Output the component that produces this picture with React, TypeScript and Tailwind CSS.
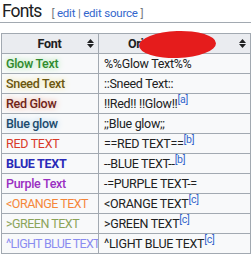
import React from 'react';

type Row = {
  name: string;
  cls: string;
  code: string;
  note?: string;
};

const rows: Row[] = [
  { name: 'Glow Text', cls: 'text-[#2f8a2f] font-medium [text-shadow:0_0_6px_#9be39b]', code: '%%Glow Text%%' },
  { name: 'Sneed Text', cls: 'text-[#6a5610] font-medium [text-shadow:0_0_6px_#efe08a]', code: '::Sneed Text::' },
  { name: 'Red Glow', cls: 'text-[#6e2418] font-medium [text-shadow:0_0_6px_#f2a58a]', code: '!!Red!! !!Glow!!', note: 'a' },
  { name: 'Blue glow', cls: 'text-[#1c4a6c] font-medium [text-shadow:0_0_6px_#a8d2ee]', code: ';;Blue glow;;' },
  { name: 'RED TEXT', cls: 'text-[#d83a2a]', code: '==RED TEXT==', note: 'b' },
  { name: 'BLUE TEXT', cls: 'text-[#2a2ab8] font-bold', code: '--BLUE TEXT--', note: 'b' },
  { name: 'Purple Text', cls: 'text-[#9a2fc2] font-medium', code: '-=PURPLE TEXT-=' },
  { name: '<ORANGE TEXT', cls: 'text-[#f5873a] tracking-[-0.5px]', code: '<ORANGE TEXT', note: 'c' },
  { name: '>GREEN TEXT', cls: 'text-[#8ca45a] tracking-[-0.5px]', code: '>GREEN TEXT', note: 'c' },
  { name: '^LIGHT BLUE TEXT', cls: 'text-[#8a8cf0] tracking-[-0.7px]', code: '^LIGHT BLUE TEXT', note: 'c' },
];

function SortIcon() {
  return (
    <svg width="7" height="9" viewBox="0 0 7 9" className="shrink-0">
      <path d="M3.5 0 L7 4 L0 4 Z M3.5 9 L0 5 L7 5 Z" fill="#202122" />
    </svg>
  );
}

export default function App() {
  return (
    <div className="w-[251px] h-[255px] overflow-hidden bg-white font-['Roboto','Liberation_Sans',sans-serif] text-[#202122]">
      <div className="flex items-baseline gap-[10px] pl-[2px] pt-[2px] border-b border-[#a2a9b1]">
        <h2 className="text-[17.5px] leading-[19px] tracking-[-0.9px]">Fonts</h2>
        <span className="text-[11.5px] tracking-[-0.2px] text-[#72777d]">
          [ <span className="text-[#3366cc]">edit</span> | <span className="text-[#3366cc]">edit source</span> ]
        </span>
      </div>

      <table className="mt-[10px] ml-[1px] w-[250px] border-collapse bg-[#f8f9fa] text-[12.5px] leading-[19px] tracking-[-0.3px] table-fixed">
        <colgroup>
          <col className="w-[97px]" />
          <col />
        </colgroup>
        <thead>
          <tr className="bg-[#eaecf0] h-[20px]">
            <th className="border border-[#a2a9b1] px-[4px] font-bold">
              <div className="flex items-center justify-between">
                <span className="flex-1 text-center pl-[6px]">Font</span>
                <SortIcon />
              </div>
            </th>
            <th className="relative border border-[#a2a9b1] px-[4px] font-bold">
              <div className="flex items-center justify-between">
                <span className="pl-[25px]">Original</span>
                <SortIcon />
              </div>
              <div className="absolute left-[40px] top-[-3px] w-[77px] h-[27px] rounded-[50%] bg-[#e51c1c] -rotate-2" />
            </th>
          </tr>
        </thead>
        <tbody>
          {rows.map((r) => (
            <tr key={r.name} className="h-[20px]">
              <td className={`border border-[#a2a9b1] px-[4px] whitespace-nowrap overflow-hidden ${r.cls}`}>{r.name}</td>
              <td className="border border-[#a2a9b1] px-[5px] whitespace-nowrap">
                {r.code}
                {r.note && (
                  <span className="relative -top-[5px] text-[10.5px] leading-none text-[#3366cc]">[{r.note}]</span>
                )}
              </td>
            </tr>
          ))}
        </tbody>
      </table>
    </div>
  );
}
